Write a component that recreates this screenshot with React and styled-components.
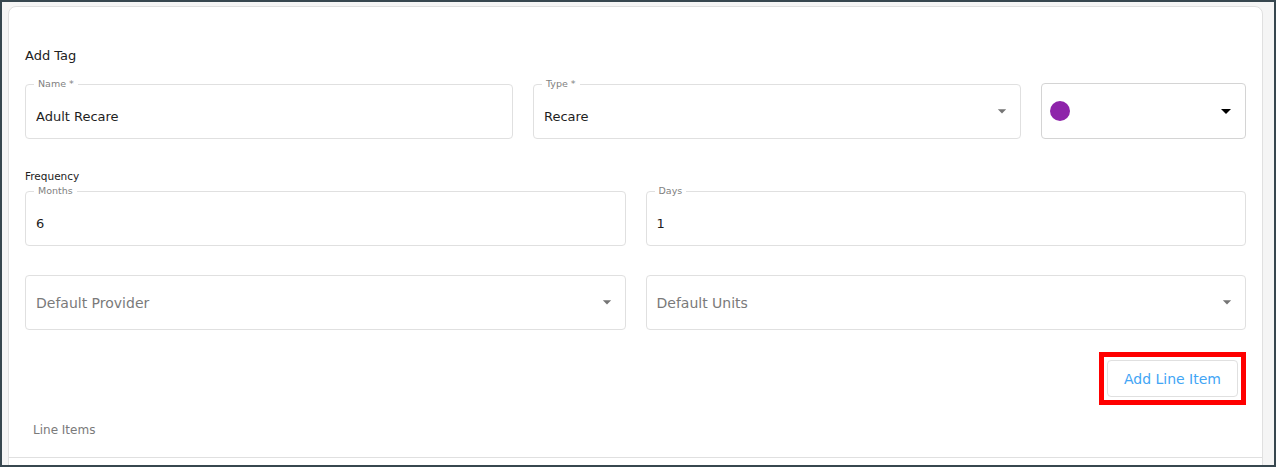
import React from "react";
import styled, { createGlobalStyle } from "styled-components";

const GlobalStyle = createGlobalStyle`
  html, body {
    margin: 0;
    padding: 0;
    background: #f5f5f5;
  }
  * {
    box-sizing: border-box;
  }
`;

const Frame = styled.div`
  width: 1276px;
  height: 467px;
  border: 2px solid #37474f;
  background: #f5f5f5;
  padding: 4px 11px 0 6px;
  overflow: hidden;
  font-family: "DejaVu Sans", Verdana, sans-serif;
`;

const Card = styled.div`
  background: #fff;
  border: 1px solid #e0e0e0;
  border-radius: 8px;
  height: 480px;
`;

const Body = styled.div`
  padding: 41px 16px 0 16px;
`;

const Title = styled.div`
  font-size: 13px;
  line-height: 16px;
  color: #212121;
  margin-bottom: 20px;
`;

const Row = styled.div`
  display: grid;
  grid-template-columns: ${(p) => p.$cols};
  column-gap: 20px;
  margin-bottom: ${(p) => p.$gap || 0}px;
`;

const SectionLabel = styled.div`
  font-size: 10.5px;
  line-height: 13px;
  color: #212121;
  margin-bottom: 8px;
`;

const Field = styled.div`
  position: relative;
  height: ${(p) => p.$h || 55}px;
  margin-top: ${(p) => p.$mt || 0}px;
  display: flex;
  align-items: ${(p) => (p.$label ? "flex-start" : "center")};
  padding: ${(p) => (p.$label ? "25px 11px 0" : "0 11px")};
`;

const Outline = styled.fieldset`
  position: absolute;
  top: -6px;
  left: 0;
  right: 0;
  bottom: 0;
  margin: 0;
  padding: 0 8px;
  border: 1px solid ${(p) => p.$border || "#e0e0e0"};
  border-radius: 4px;
  pointer-events: none;
  min-width: 0;
`;

const Legend = styled.legend`
  height: 12px;
  line-height: 12px;
  font-size: 9.5px;
  color: #7f7f7f;
  padding: ${(p) => (p.$empty ? "0" : "0 4px")};
  max-width: ${(p) => (p.$empty ? "0.01px" : "none")};
  overflow: hidden;
  white-space: nowrap;
`;

const Value = styled.input`
  flex: 1;
  min-width: 0;
  border: none;
  outline: none;
  background: transparent;
  padding: 0;
  font-family: inherit;
  font-size: ${(p) => (p.placeholder ? 14 : 13)}px;
  line-height: 16px;
  color: #1e1e1e;

  &::placeholder {
    color: #7a7a7a;
    opacity: 1;
  }
`;

const Arrow = styled.svg`
  flex: none;
  margin-right: ${(p) => p.$mr}px;
  align-self: center;
  margin-top: ${(p) => p.$shift || 0}px;
`;

const Swatch = styled.span`
  width: 20px;
  height: 20px;
  border-radius: 50%;
  background: ${(p) => p.$color};
  flex: none;
`;

const Spacer = styled.div`
  flex: 1;
`;

const Actions = styled.div`
  display: flex;
  justify-content: flex-end;
  margin-top: 22px;
`;

const Highlight = styled.div`
  border: 5px solid #ff0000;
  padding: 3px;
`;

const TextButton = styled.button`
  height: 37px;
  padding: 0 16px;
  background: #fff;
  border: 1px solid #e0e0e0;
  border-radius: 4px;
  color: #42a5f5;
  font-family: inherit;
  font-size: 14px;
  cursor: pointer;
`;

const SubHeading = styled.div`
  font-size: 12px;
  line-height: 15px;
  color: #7a7a7a;
  padding-left: 8px;
  margin-top: 18px;
  margin-bottom: 19px;
`;

const TableTop = styled.div`
  border-top: 1px solid #e0e0e0;
  height: 40px;
`;

const DropArrow = ({ size = 20, color = "#757575", mr = -2, shift }) => (
  <Arrow width={size} height={size} viewBox="0 0 24 24" $mr={mr} $shift={shift}>
    <path d="M7 10l5 5 5-5z" fill={color} />
  </Arrow>
);

const TextField = ({ label, value, placeholder, select }) => (
  <Field $label={!!label}>
    <Outline>
      <Legend $empty={!label}>{label}</Legend>
    </Outline>
    <Value readOnly value={value || ""} placeholder={placeholder} />
    {select && <DropArrow shift={label ? -26 : -2} />}
  </Field>
);

export default function App() {
  return (
    <>
      <GlobalStyle />
      <Frame>
        <Card>
          <Body>
            <Title>Add Tag</Title>
            <Row $cols="1fr 1fr 205px" $gap={31}>
              <TextField label="Name *" value="Adult Recare" />
              <TextField label="Type *" value="Recare" select />
              <Field $mt={-1} $h={56} style={{ paddingLeft: 9 }}>
                <Outline $border="#d4d4d4">
                  <Legend $empty />
                </Outline>
                <Swatch $color="#8e24aa" />
                <Spacer />
                <DropArrow size={24} color="#000" mr={-3} />
              </Field>
            </Row>

            <SectionLabel>Frequency</SectionLabel>
            <Row $cols="1fr 1fr" $gap={29}>
              <TextField label="Months" value="6" />
              <TextField label="Days" value="1" />
            </Row>

            <Row $cols="1fr 1fr">
              <TextField placeholder="Default Provider" select />
              <TextField placeholder="Default Units" select />
            </Row>

            <Actions>
              <Highlight>
                <TextButton>Add Line Item</TextButton>
              </Highlight>
            </Actions>

            <SubHeading>Line Items</SubHeading>
          </Body>
          <TableTop />
        </Card>
      </Frame>
    </>
  );
}
